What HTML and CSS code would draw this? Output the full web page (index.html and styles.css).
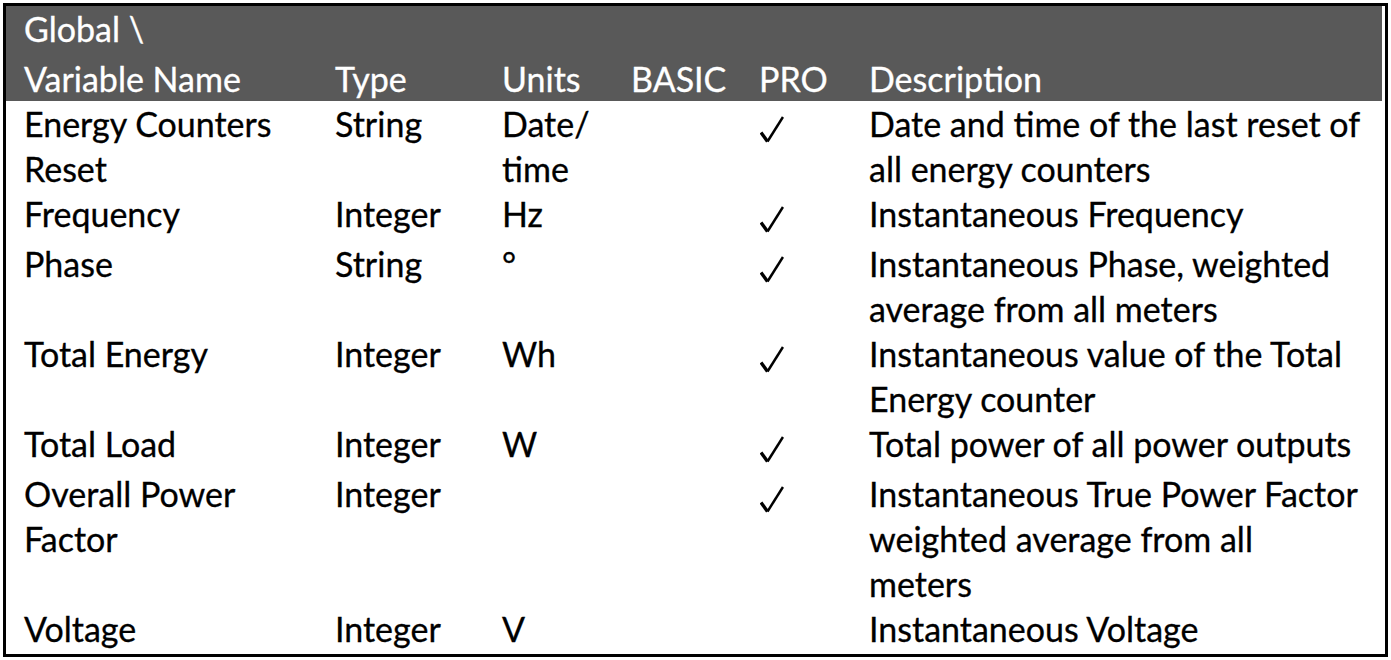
FILE: index.html
```html
<!DOCTYPE html>
<html lang="en">
<head>
<meta charset="utf-8">
<title>Global variables</title>
<link rel="stylesheet" href="styles.css">
</head>
<body>
<div class="page">
<table class="vars">
  <colgroup>
    <col class="c-name">
    <col class="c-type">
    <col class="c-units">
    <col class="c-basic">
    <col class="c-pro">
    <col class="c-desc">
  </colgroup>
  <thead>
    <tr class="h-group"><th colspan="6">Global \</th></tr>
    <tr class="h-cols">
      <th class="first">Variable Name</th>
      <th>Type</th>
      <th>Units</th>
      <th>BASIC</th>
      <th>PRO</th>
      <th>Description</th>
    </tr>
  </thead>
  <tbody>
    <tr class="first-row">
      <td class="first">Energy Counters<br>Reset</td>
      <td>String</td>
      <td>Date/<br>time</td>
      <td></td>
      <td><svg class="check" viewBox="0 0 24 27" width="24" height="27"><path d="M1 16.5 L7.5 25.5" stroke-width="3.4"/><path d="M7.5 25.5 L23 1" stroke-width="2.5"/></svg></td>
      <td>Date and time of the last reset of<br>all energy counters</td>
    </tr>
    <tr class="tall">
      <td class="first">Frequency</td>
      <td>Integer</td>
      <td>Hz</td>
      <td></td>
      <td><svg class="check" viewBox="0 0 24 27" width="24" height="27"><path d="M1 16.5 L7.5 25.5" stroke-width="3.4"/><path d="M7.5 25.5 L23 1" stroke-width="2.5"/></svg></td>
      <td>Instantaneous Frequency</td>
    </tr>
    <tr>
      <td class="first">Phase</td>
      <td>String</td>
      <td>°</td>
      <td></td>
      <td><svg class="check" viewBox="0 0 24 27" width="24" height="27"><path d="M1 16.5 L7.5 25.5" stroke-width="3.4"/><path d="M7.5 25.5 L23 1" stroke-width="2.5"/></svg></td>
      <td>Instantaneous Phase, weighted<br>average from all meters</td>
    </tr>
    <tr>
      <td class="first">Total Energy</td>
      <td>Integer</td>
      <td>Wh</td>
      <td></td>
      <td><svg class="check" viewBox="0 0 24 27" width="24" height="27"><path d="M1 16.5 L7.5 25.5" stroke-width="3.4"/><path d="M7.5 25.5 L23 1" stroke-width="2.5"/></svg></td>
      <td>Instantaneous value of the Total<br>Energy counter</td>
    </tr>
    <tr class="tall">
      <td class="first">Total Load</td>
      <td>Integer</td>
      <td>W</td>
      <td></td>
      <td><svg class="check" viewBox="0 0 24 27" width="24" height="27"><path d="M1 16.5 L7.5 25.5" stroke-width="3.4"/><path d="M7.5 25.5 L23 1" stroke-width="2.5"/></svg></td>
      <td>Total power of all power outputs</td>
    </tr>
    <tr>
      <td class="first">Overall Power<br>Factor</td>
      <td>Integer</td>
      <td></td>
      <td></td>
      <td><svg class="check" viewBox="0 0 24 27" width="24" height="27"><path d="M1 16.5 L7.5 25.5" stroke-width="3.4"/><path d="M7.5 25.5 L23 1" stroke-width="2.5"/></svg></td>
      <td>Instantaneous True Power Factor<br>weighted average from all<br>meters</td>
    </tr>
    <tr>
      <td class="first">Voltage</td>
      <td>Integer</td>
      <td>V</td>
      <td></td>
      <td></td>
      <td>Instantaneous Voltage</td>
    </tr>
  </tbody>
</table>
</div>
</body>
</html>
```

FILE: styles.css
```css
html, body {
  margin: 0;
  padding: 0;
  background: #ffffff;
}

.page {
  padding: 3px;
}

.vars {
  width: 1385px;
  table-layout: fixed;
  border-collapse: separate;
  border-spacing: 0;
  border: 3px solid #000000;
  padding: 0 3px 3px 0;
  font-family: "Lato", "Liberation Sans", sans-serif;
  font-size: 34px;
  line-height: 45px;
  color: #000000;
  -webkit-text-stroke: 0.3px currentColor;
}

.c-name { width: 329px; }
.c-type { width: 167px; }
.c-units { width: 129px; }
.c-basic { width: 128px; }
.c-pro { width: 110px; }
.c-desc { width: auto; }

.vars th,
.vars td {
  padding: 0;
  text-align: left;
  vertical-align: top;
  font-weight: normal;
  white-space: nowrap;
}

.vars th.first,
.vars td.first,
.h-group th {
  padding-left: 18px;
}

.vars thead th {
  background: #595959;
  color: #ffffff;
}

.h-group th {
  height: 50px;
  padding-top: 0;
}

.h-cols th {
  height: 44px;
}

.vars tr.tall td {
  height: 50px;
}

.check {
  display: inline-block;
  vertical-align: -6px;
  margin-left: 1px;
  fill: none;
  stroke: #000000;
  stroke-linecap: butt;
  -webkit-text-stroke: 0;
}
```
